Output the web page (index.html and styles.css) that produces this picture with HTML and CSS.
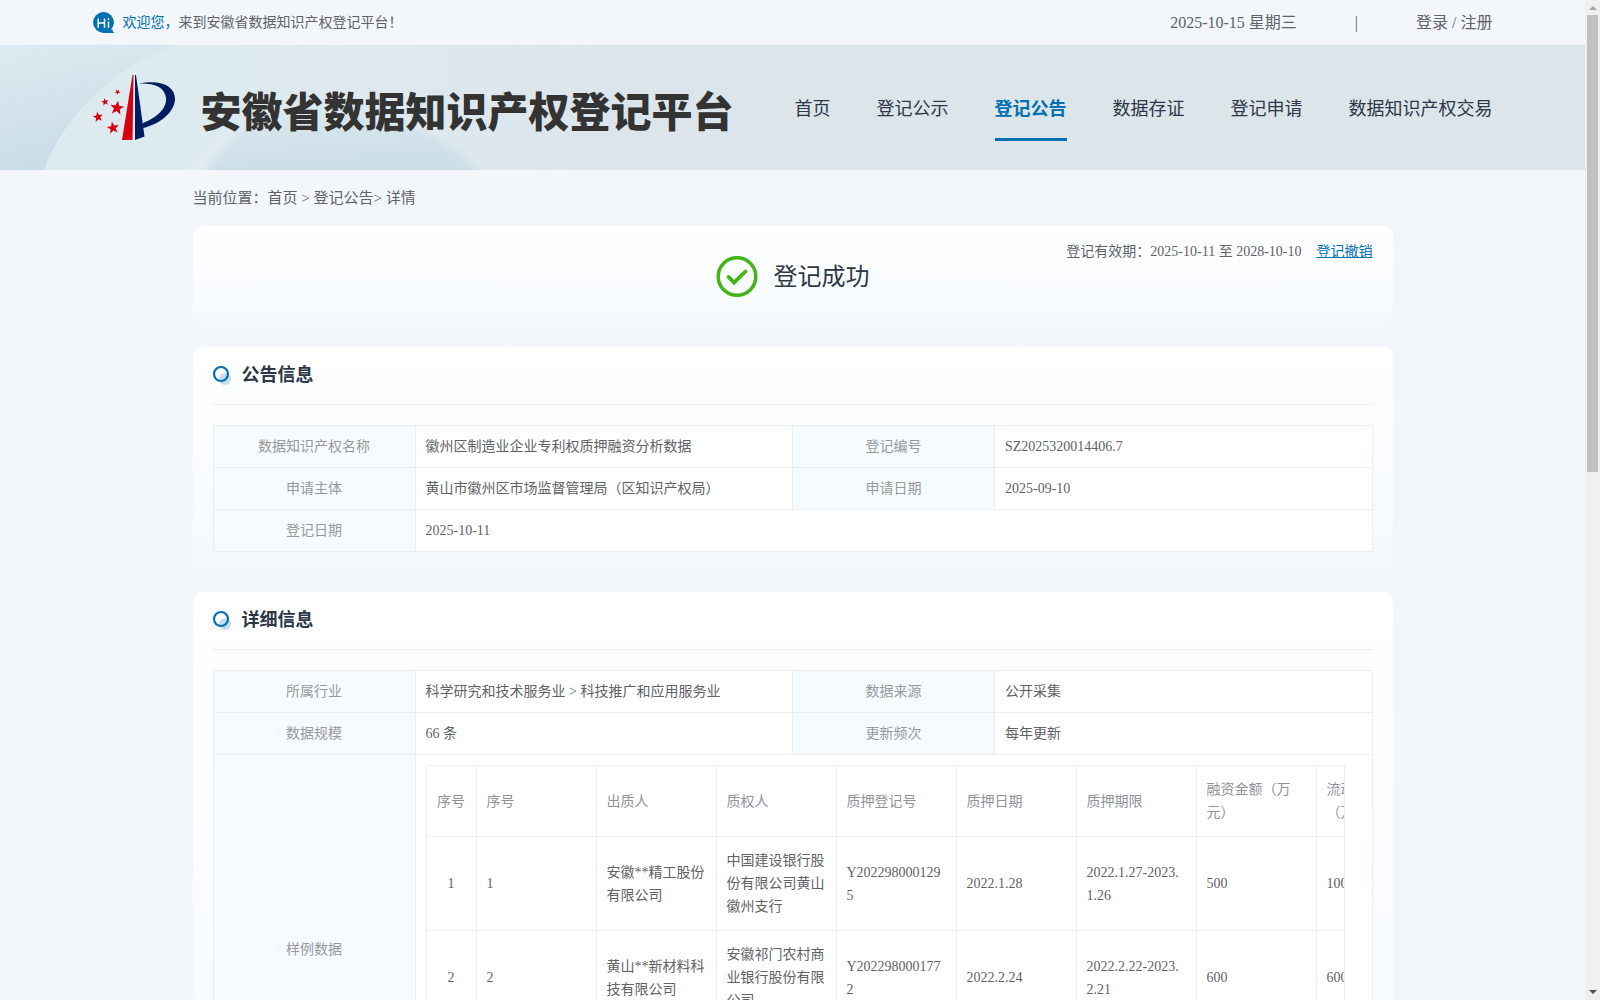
FILE: index.html
```html
<!DOCTYPE html>
<html lang="zh-CN">

<head>
    <meta charset="UTF-8">
    <meta name="viewport" content="width=device-width, initial-scale=1.0">
    <title>安徽省数据知识产权登记平台</title>
    <link rel="stylesheet" href="styles.css">
</head>

<body>
    <div class="topbar">
        <div class="wide topbar-inner">
            <div class="welcome">
                <svg class="hi" viewBox="0 0 22 22" aria-hidden="true">
                    <circle cx="10.500" cy="10.500" r="10.400" fill="#0070b0" />
                    <path d="M10 20.900h11.500c-1.500-.8-2.200-2-2-4z" fill="#0070b0" />
                    <path d="M5.200 6.500v9.300M11.500 6.500v9.300M5.200 11h6.300M15.500 9.500v6.300M15.500 6.300v1.700" stroke="#fff" stroke-width="1.500" fill="none" />
                </svg>
                <p><span class="blue">欢迎您，</span>来到安徽省数据知识产权登记平台！</p>
            </div>
            <div class="user">
                <span>2025-10-15 星期三</span>
                <span>|</span>
                <a href="#">登录 / 注册</a>
            </div>
        </div>
    </div>

    <header class="header">
        <svg class="header-bg" viewBox="0 0 800 125" aria-hidden="true">
            <defs>
                <linearGradient id="base" x1="0" x2="1">
                    <stop offset="0" stop-color="#dcebf1" />
                    <stop offset="0.5" stop-color="#dee9ef" />
                    <stop offset="0.76" stop-color="#dce5eb" />
                    <stop offset="1" stop-color="#dbe5ea" />
                </linearGradient>
                <linearGradient id="corner" x1="0" y1="0" x2="0.3" y2="1">
                    <stop offset="0" stop-color="#dcebf1" />
                    <stop offset="0.5" stop-color="#d3e3eb" />
                    <stop offset="1" stop-color="#c8dce8" />
                </linearGradient>
                <linearGradient id="dome" x1="0" y1="0" x2="0.2" y2="1">
                    <stop offset="0" stop-color="#dce8ee" />
                    <stop offset="0.6" stop-color="#cddfe8" />
                    <stop offset="1" stop-color="#cddfe8" />
                </linearGradient>
                <filter id="soft">
                    <feGaussianBlur stdDeviation="4" />
                </filter>
            </defs>
            <rect width="800" height="125" fill="url(#base)" />
            <path d="M0 0H175C110 25 65 70 44 125H0z" fill="url(#corner)" />
            <path d="M206 160V127C245 72 280 58 345 66C410 74 450 98 480 127V160z" fill="url(#dome)" filter="url(#soft)" />
            <path d="M186 127C202 105 222 90 240 82C222 98 210 110 202 127z" fill="#e4edf3" filter="url(#soft)" />
        </svg>
        <div class="wide header-inner">
            <a class="brand" href="#">
                <svg class="logo" viewBox="0 0 82 66" aria-hidden="true">
                    <defs>
                        <path id="star" d="M0-10L2.400-3.300 9.500-3.100 3.900 1.300 5.900 8.100 0 4.100-5.900 8.100-3.900 1.300-9.500-3.100-2.400-3.300z" />
                    </defs>
                    <path d="M39.500 0L29 65h10.500L40.500 0z" fill="#d7000f" />
                    <path d="M42 0v65l9.500-3.500L43 0z" fill="#001c60" />
                    <path d="M46 8.500C68 4 82 11 82 24C82 36 68 49 50 53V48C63 43 74 34 73 23C72 12 61 8 46 8.500z" fill="#001c60" />
                    <g fill="#d7000f">
                        <use href="#star" transform="translate(24 33) rotate(8) scale(.75)" />
                        <use href="#star" transform="translate(12 27) rotate(-12) scale(.4)" />
                        <use href="#star" transform="translate(5 42) rotate(-10) scale(.55)" />
                        <use href="#star" transform="translate(20 53) rotate(-10) scale(.65)" />
                        <use href="#star" transform="translate(24.500 17) rotate(30) scale(.3)" />
                    </g>
                </svg>
                <h1>安徽省数据知识产权登记平台</h1>
            </a>
            <nav class="nav">
                <a href="#">首页</a>
                <a href="#">登记公示</a>
                <a href="#" class="active">登记公告</a>
                <a href="#">数据存证</a>
                <a href="#">登记申请</a>
                <a href="#">数据知识产权交易</a>
            </nav>
        </div>
    </header>

    <main class="content">
        <div class="crumbs">当前位置：<a href="#">首页</a> &gt; <a href="#">登记公告</a>&gt; 详情</div>

        <section class="card result">
            <svg class="ok" viewBox="0 0 42 42" aria-hidden="true">
                <circle cx="21" cy="20.500" r="18.800" fill="none" stroke="#43b516" stroke-width="3.500" />
                <path d="M12.500 21l5.500 5.500L29.500 15.500" fill="none" stroke="#43b516" stroke-width="3.800" stroke-linecap="round" />
            </svg>
            <h2>登记成功</h2>
            <div class="validity">
                <span>登记有效期：2025-10-11 至 2028-10-10</span>
                <a href="#">登记撤销</a>
            </div>
        </section>

        <section class="card">
            <h3 class="card-title">
                <svg class="dot" viewBox="0 0 20 20" aria-hidden="true">
                    <circle cx="12" cy="13" r="6" fill="#c5ddec" />
                    <circle cx="8" cy="8" r="7" fill="none" stroke="#0070b0" stroke-width="2.200" />
                </svg>
                公告信息
            </h3>
            <table class="info">
                <tr>
                    <th>数据知识产权名称</th>
                    <td>徽州区制造业企业专利权质押融资分析数据</td>
                    <th>登记编号</th>
                    <td>SZ2025320014406.7</td>
                </tr>
                <tr>
                    <th>申请主体</th>
                    <td>黄山市徽州区市场监督管理局（区知识产权局）</td>
                    <th>申请日期</th>
                    <td>2025-09-10</td>
                </tr>
                <tr>
                    <th>登记日期</th>
                    <td colspan="3">2025-10-11</td>
                </tr>
            </table>
        </section>

        <section class="card">
            <h3 class="card-title">
                <svg class="dot" viewBox="0 0 20 20" aria-hidden="true">
                    <circle cx="12" cy="13" r="6" fill="#c5ddec" />
                    <circle cx="8" cy="8" r="7" fill="none" stroke="#0070b0" stroke-width="2.200" />
                </svg>
                详细信息
            </h3>
            <table class="info">
                <tr>
                    <th>所属行业</th>
                    <td>科学研究和技术服务业 &gt; 科技推广和应用服务业</td>
                    <th>数据来源</th>
                    <td>公开采集</td>
                </tr>
                <tr>
                    <th>数据规模</th>
                    <td>66 条</td>
                    <th>更新频次</th>
                    <td>每年更新</td>
                </tr>
                <tr>
                    <th>样例数据</th>
                    <td colspan="3">
                        <div class="sample">
                            <table>
                                <thead>
                                    <tr>
                                        <th class="idx">序号</th>
                                        <th>序号</th>
                                        <th>出质人</th>
                                        <th>质权人</th>
                                        <th>质押登记号</th>
                                        <th>质押日期</th>
                                        <th>质押期限</th>
                                        <th>融资金额（万元）</th>
                                        <th>流动资金贷款（万元）</th>
                                    </tr>
                                </thead>
                                <tbody>
                                    <tr>
                                        <td class="idx">1</td>
                                        <td>1</td>
                                        <td>安徽**精工股份有限公司</td>
                                        <td>中国建设银行股份有限公司黄山徽州支行</td>
                                        <td>Y2022980001295</td>
                                        <td>2022.1.28</td>
                                        <td>2022.1.27-2023.1.26</td>
                                        <td>500</td>
                                        <td>1000</td>
                                    </tr>
                                    <tr>
                                        <td class="idx">2</td>
                                        <td>2</td>
                                        <td>黄山**新材料科技有限公司</td>
                                        <td>安徽祁门农村商业银行股份有限公司</td>
                                        <td>Y2022980001772</td>
                                        <td>2022.2.24</td>
                                        <td>2022.2.22-2023.2.21</td>
                                        <td>600</td>
                                        <td>600</td>
                                    </tr>
                                </tbody>
                            </table>
                        </div>
                    </td>
                </tr>
            </table>
        </section>
    </main>

    <div class="scrollbar" aria-hidden="true">
        <i class="up"></i>
        <i class="thumb"></i>
        <i class="down"></i>
    </div>
</body>

</html>
```
FILE: styles.css
```css
* {
    box-sizing: border-box;
    margin: 0;
    padding: 0;
}

body {
    height: 100vh;
    overflow: hidden;
    padding-right: 15px;
    background-color: #f3f7fc;
    color: #606266;
    font-family: "Liberation Serif", "Noto Sans CJK SC", serif;
    font-size: 14px;
    line-height: 21px;
    text-spacing-trim: space-all;
}

a {
    color: inherit;
    text-decoration: none;
}

.wide {
    max-width: 1400px;
    margin: 0 auto;
}

.blue {
    color: #0070b0;
}

/* top bar */
.topbar-inner {
    display: flex;
    justify-content: space-between;
    align-items: center;
    height: 45px;
}

.welcome {
    display: flex;
    align-items: center;
    gap: 8px;
}

.hi {
    width: 22px;
    height: 22px;
}

.user {
    display: flex;
    gap: 58px;
    font-size: 16px;
}

/* header */
.header {
    position: relative;
    background-color: #dbe5ea;
}

.header-bg {
    position: absolute;
    top: 0;
    left: 0;
    width: 800px;
    height: 125px;
}

.header-inner {
    position: relative;
    display: flex;
    justify-content: space-between;
    align-items: center;
    height: 125px;
}

.brand {
    display: flex;
    align-items: center;
    gap: 26px;
}

.logo {
    width: 82px;
    height: 66px;
}

.brand h1 {
    padding-top: 10px;
    color: #333;
    font-size: 41px;
    font-weight: 900;
    line-height: 60px;
}

.nav {
    display: flex;
    gap: 46px;
    padding-top: 6px;
    color: #2c3748;
    font-size: 18px;
    line-height: 58px;
}

.nav a {
    border-bottom: 3px solid transparent;
}

.nav .active {
    border-color: #0070b0;
    color: #0070b0;
    font-weight: bold;
}

/* content */
.content {
    max-width: 1200px;
    margin: 0 auto;
}

.crumbs {
    font-size: 15px;
    line-height: 56px;
}

.card {
    position: relative;
    margin-bottom: 20px;
    padding: 0 20px 20px;
    border-radius: 10px;
    background: linear-gradient(#fff, #f7fbff 80%, #f4f8fd);
}

.result {
    display: flex;
    justify-content: center;
    align-items: center;
    gap: 16px;
    height: 101px;
    padding: 0 20px;
}

.ok {
    width: 42px;
    height: 42px;
}

.result h2 {
    color: #2c3748;
    font-size: 24px;
    font-weight: normal;
    line-height: 36px;
}

.validity {
    position: absolute;
    top: 15px;
    right: 20px;
    display: flex;
    gap: 15px;
}

.validity a {
    color: #0070b0;
    text-decoration: underline;
}

.card-title {
    display: flex;
    align-items: center;
    gap: 9px;
    height: 58px;
    margin-bottom: 20px;
    border-bottom: 1px solid #ebedf0;
    color: #2c3748;
    font-size: 18px;
}

.dot {
    width: 20px;
    height: 20px;
    overflow: visible;
}

/* tables */
table {
    width: 100%;
    border-collapse: collapse;
    table-layout: fixed;
}

.info {
    background-color: #fff;
}

.info th,
.info td {
    padding: 10px;
    border: 1px solid #ebedf0;
    text-align: left;
    font-weight: normal;
}

.info > tbody > tr > th {
    width: 202px;
    background-color: #f5fbff;
    color: #999;
    text-align: center;
}

.sample {
    min-height: 368px;
    margin-right: 17px;
    overflow: hidden;
    border-right: 1px solid #ebeef5;
}

.sample table {
    width: 1010px;
    line-height: 23px;
}

.sample th,
.sample td {
    width: 120px;
    padding: 12px 10px;
    border-color: #ebeef5;
    word-break: break-all;
}

.sample th {
    color: #909399;
}

.sample .idx {
    width: 50px;
    text-align: center;
}

/* page scrollbar */
.scrollbar {
    position: fixed;
    top: 0;
    right: 0;
    bottom: 0;
    display: flex;
    flex-direction: column;
    align-items: center;
    width: 15px;
    padding: 6px 0;
    background-color: #f0f0f0;
}

.up,
.down {
    border: 4px solid transparent;
}

.up {
    border-top: 0;
    border-bottom-color: #a3a3a3;
}

.thumb {
    width: 11px;
    height: 457px;
    margin: 5px 0 auto;
    background-color: #c1c1c1;
}

.down {
    border-bottom: 0;
    border-top-color: #505050;
}
```
